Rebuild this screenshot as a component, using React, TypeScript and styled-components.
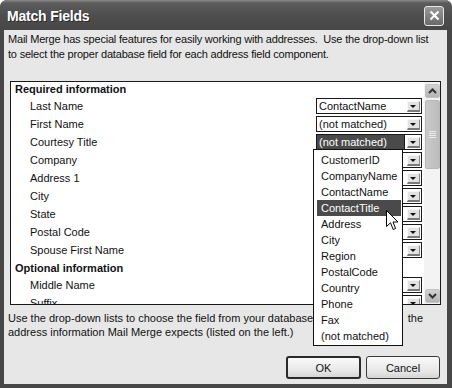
import React from 'react'
import styled, { createGlobalStyle } from 'styled-components'

const GlobalStyle = createGlobalStyle`
  html, body {
    margin: 0;
    padding: 0;
    background: #ffffff;
  }
  body {
    font-family: "Liberation Sans", Arial, sans-serif;
    font-size: 11px;
    color: #111;
  }
`

const Window = styled.div`
  position: relative;
  width: 452px;
  height: 388px;
  box-sizing: border-box;
  display: flex;
  flex-direction: column;
  background: #474747;
  border-radius: 7px 7px 0 0;
  overflow: hidden;
`

const TitleBar = styled.div`
  height: 30px;
  flex: none;
  display: flex;
  align-items: center;
  justify-content: space-between;
  padding: 0 8px 0 7px;
  background: linear-gradient(#8a8a8a 0, #5c5c5c 3px, #4f4f4f 14px, #474747 100%);
`

const TitleText = styled.div`
  color: #fff;
  font-family: "Liberation Sans", Arial, sans-serif;
  font-weight: bold;
  font-size: 14px;
  letter-spacing: -0.2px;
  text-shadow: 1px 1px 0 #2a2a2a;
  margin-top: 2px;
`

const CloseButton = styled.div`
  width: 18px;
  height: 18px;
  border: 1px solid #e8e8e8;
  border-radius: 3px;
  background: linear-gradient(#9a9a9a, #6a6a6a);
  display: flex;
  align-items: center;
  justify-content: center;
  margin-top: 1px;
`

const Body = styled.div`
  flex: 1;
  display: flex;
  flex-direction: column;
  background: #e7e7e7;
  margin: 0 5px 4px 4px;
  padding: 2px 4px 0 4px;
`

const Paragraph = styled.div`
  line-height: 15px;
  letter-spacing: -0.2px;
  white-space: nowrap;
`

const ListBox = styled.div`
  margin: 19px 2px 0 2px;
  height: 224px;
  box-sizing: border-box;
  border: 1px solid #1a1a1a;
  background: #fff;
  display: flex;
  overflow: hidden;
`

const Rows = styled.div`
  flex: 1;
  margin-top: -2px;
  padding-right: 2px;
`

const Row = styled.div<{ $header?: boolean }>`
  height: ${p => (p.$header ? 17 : 18)}px;
  display: flex;
  align-items: flex-start;
  justify-content: space-between;
  padding-left: ${p => (p.$header ? 4 : 19)}px;
  font-weight: ${p => (p.$header ? 'bold' : 'normal')};
`

const RowLabel = styled.span`
  line-height: 16px;
  padding-top: 1px;
`

const Select = styled.div`
  width: 106px;
  height: 16px;
  margin-top: 1px;
  box-sizing: border-box;
  border: 1px solid #1a1a1a;
  background: #fff;
  display: flex;
  align-items: stretch;
`

const SelectValue = styled.div<{ $focused?: boolean }>`
  flex: 1;
  padding-left: 2px;
  line-height: 14px;
  color: ${p => (p.$focused ? '#fff' : '#111')};
  background: ${p => (p.$focused ? '#4a4a4a' : '#fff')};
  white-space: nowrap;
  overflow: hidden;
`

const ArrowCell = styled.div<{ $focused?: boolean }>`
  width: 17px;
  display: flex;
  align-items: flex-end;
  justify-content: center;
  padding-bottom: 1px;
  box-sizing: border-box;
  border-left: 1px solid ${p => (p.$focused ? '#1a1a1a' : '#fff')};
`

const ArrowButton = styled.div`
  width: 13px;
  height: 11px;
  box-sizing: border-box;
  background: #e2e2e2;
  border-top: 1px solid #f6f6f6;
  border-left: 1px solid #f6f6f6;
  border-right: 1px solid #8a8a8a;
  border-bottom: 2px solid #7a7a7a;
  display: flex;
  align-items: flex-end;
  justify-content: center;
  padding-bottom: 2px;
`

const Triangle = styled.div`
  width: 0;
  height: 0;
  border-left: 3px solid transparent;
  border-right: 3px solid transparent;
  border-top: 3px solid #111;
`

const ScrollBar = styled.div`
  width: 16px;
  flex: none;
  display: flex;
  flex-direction: column;
  align-items: center;
  padding: 2px 0 1px;
  box-sizing: border-box;
  background: #f3f3f3;
`

const ScrollButton = styled.div`
  width: 15px;
  height: 14px;
  border-radius: 2px;
  background: linear-gradient(#d2d2d2, #b4b4b4);
  border: 1px solid #c4c4c4;
  box-sizing: border-box;
  display: flex;
  align-items: center;
  justify-content: center;
  flex: none;
`

const Thumb = styled.div`
  width: 15px;
  height: 69px;
  margin-top: 2px;
  border-radius: 2px;
  background: linear-gradient(90deg, #c9c9c9, #bdbdbd);
  border: 1px solid #b8b8b8;
  box-sizing: border-box;
  display: flex;
  flex-direction: column;
  align-items: center;
  justify-content: center;
  gap: 1px;
`

const Grip = styled.div`
  width: 7px;
  height: 1px;
  background: #ececec;
`

const Track = styled.div`
  flex: 1;
`

const Footer = styled.div`
  margin-top: 6px;
  line-height: 14px;
  white-space: nowrap;
`

const FooterTail = styled.span`
  word-spacing: 3px;
`

const ButtonRow = styled.div`
  margin-top: auto;
  display: flex;
  justify-content: flex-end;
  gap: 5px;
  padding: 0 3px 5px 0;
`

const PushButton = styled.div<{ $default?: boolean; $w: number }>`
  width: ${p => p.$w}px;
  height: 23px;
  box-sizing: border-box;
  display: flex;
  align-items: center;
  justify-content: center;
  background: linear-gradient(#fafafa, #e6e6e6 70%, #d4d4d4);
  border: ${p => (p.$default ? '2px solid #2a2a2a' : '1px solid #3a3a3a')};
  border-radius: 3px;
`

const Popup = styled.div`
  position: absolute;
  left: 313px;
  top: 149px;
  width: 90px;
  box-sizing: border-box;
  border: 1px solid #111;
  background: #fff;
  padding: 2px 1px 1px 3px;
`

const PopupItem = styled.div<{ $active?: boolean }>`
  height: 16px;
  line-height: 16px;
  padding-left: 4px;
  background: ${p => (p.$active ? '#4a4a4a' : 'transparent')};
  color: ${p => (p.$active ? '#fff' : '#111')};
  white-space: nowrap;
`

const Cursor = styled.svg`
  position: absolute;
  left: 386px;
  top: 210px;
`

type Field = { label: string; header?: boolean; value?: string; focused?: boolean }

const fields: Field[] = [
  { label: 'Required information', header: true },
  { label: 'Last Name', value: 'ContactName' },
  { label: 'First Name', value: '(not matched)' },
  { label: 'Courtesy Title', value: '(not matched)', focused: true },
  { label: 'Company', value: 'CompanyName' },
  { label: 'Address 1', value: 'Address' },
  { label: 'City', value: 'City' },
  { label: 'State', value: 'Region' },
  { label: 'Postal Code', value: 'PostalCode' },
  { label: 'Spouse First Name', value: '(not matched)' },
  { label: 'Optional information', header: true },
  { label: 'Middle Name', value: '(not matched)' },
  { label: 'Suffix', value: '(not matched)' },
]

const options = [
  'CustomerID',
  'CompanyName',
  'ContactName',
  'ContactTitle',
  'Address',
  'City',
  'Region',
  'PostalCode',
  'Country',
  'Phone',
  'Fax',
  '(not matched)',
]

const Chevron = ({ up }: { up?: boolean }) => (
  <svg width='9' height='6' viewBox='0 0 9 6'>
    <path d={up ? 'M1 5 L4.5 1.5 L8 5' : 'M1 1 L4.5 4.5 L8 1'} fill='none' stroke='#333' strokeWidth='2' />
  </svg>
)

export default function App() {
  return (
    <>
      <GlobalStyle />
      <Window>
        <TitleBar>
          <TitleText>Match Fields</TitleText>
          <CloseButton>
            <svg width='11' height='11' viewBox='0 0 11 11'>
              <path d='M1.5 1.5 L9.5 9.5 M9.5 1.5 L1.5 9.5' stroke='#fff' strokeWidth='2.2' />
            </svg>
          </CloseButton>
        </TitleBar>
        <Body>
          <Paragraph>
            Mail Merge has special features for easily working with addresses.&nbsp; Use the drop-down list
            <br />
            to select the proper database field for each address field component.
          </Paragraph>
          <ListBox>
            <Rows>
              {fields.map(f => (
                <Row key={f.label} $header={f.header}>
                  <RowLabel>{f.label}</RowLabel>
                  {!f.header && (
                    <Select>
                      <SelectValue $focused={f.focused}>{f.value}</SelectValue>
                      <ArrowCell $focused={f.focused}>
                        <ArrowButton>
                          <Triangle />
                        </ArrowButton>
                      </ArrowCell>
                    </Select>
                  )}
                </Row>
              ))}
            </Rows>
            <ScrollBar>
              <ScrollButton>
                <Chevron up />
              </ScrollButton>
              <Thumb>
                <Grip />
                <Grip />
                <Grip />
                <Grip />
              </Thumb>
              <Track />
              <ScrollButton>
                <Chevron />
              </ScrollButton>
            </ScrollBar>
          </ListBox>
          <Footer>
            Use the drop-down lists to choose the field from your database <FooterTail>to correspond to the</FooterTail>
            <br />
            address information Mail Merge expects (listed on the left.)
          </Footer>
          <ButtonRow>
            <PushButton $default $w={75}>OK</PushButton>
            <PushButton $w={74}>Cancel</PushButton>
          </ButtonRow>
        </Body>
        <Popup>
          {options.map(o => (
            <PopupItem key={o} $active={o === 'ContactTitle'}>{o}</PopupItem>
          ))}
        </Popup>
        <Cursor width='13' height='21' viewBox='0 0 13 21'>
          <path d='M0.5 0.5 L0.5 16.5 L4.5 12.8 L7.2 19.5 L9.6 18.5 L7 12 L12 12 Z' fill='#fff' stroke='#000' strokeWidth='1' />
        </Cursor>
      </Window>
    </>
  )
}
